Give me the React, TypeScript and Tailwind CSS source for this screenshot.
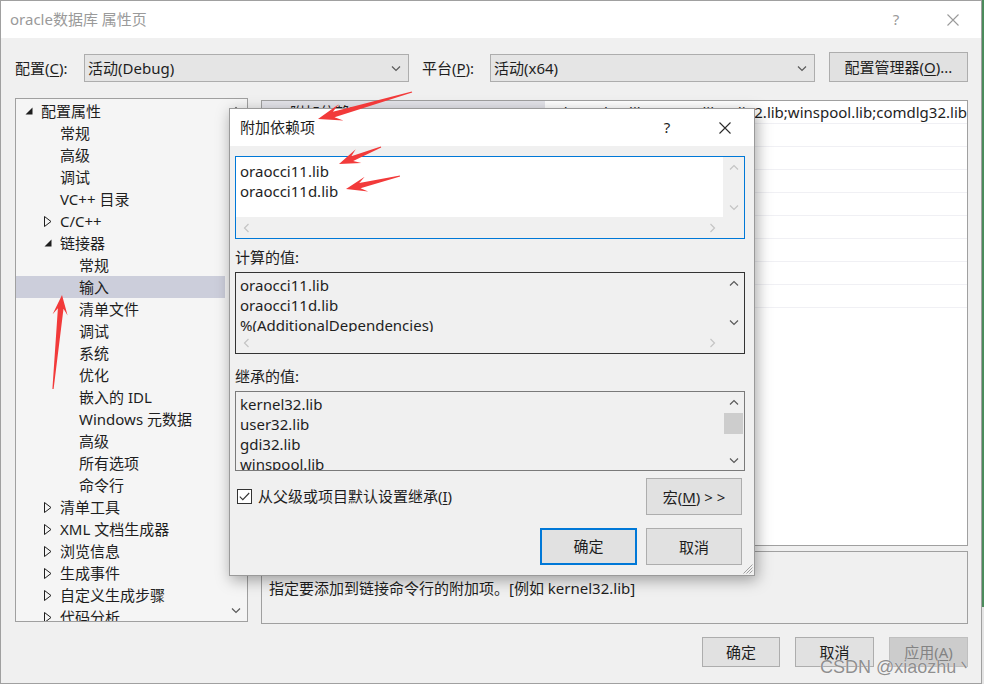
import React from "react";

type Dir = "up" | "down" | "left" | "right";

function Chevron({ dir, light = false }: { dir: Dir; light?: boolean }) {
  const d = {
    up: "M1 6.5 L5 2.5 L9 6.5",
    down: "M1 3.5 L5 7.5 L9 3.5",
    left: "M6.5 1 L2.5 5 L6.5 9",
    right: "M3.5 1 L7.5 5 L3.5 9",
  }[dir];
  return (
    <svg width="10" height="10" viewBox="0 0 10 10" className="block">
      <path d={d} fill="none" stroke={light ? "#c4c4c4" : "#5a5a5a"} strokeWidth="1.2" />
    </svg>
  );
}

function CloseX({ color }: { color: string }) {
  return (
    <svg width="12" height="12" viewBox="0 0 12 12" className="block">
      <path d="M0.5 0.5 L11.5 11.5 M11.5 0.5 L0.5 11.5" stroke={color} strokeWidth="1.1" />
    </svg>
  );
}

// red annotation arrows drawn over the screenshot
function arrow(x1: number, y1: number, x2: number, y2: number, head = 22, half = 8, neck = 2.6) {
  const len = Math.hypot(x2 - x1, y2 - y1);
  const ux = (x2 - x1) / len;
  const uy = (y2 - y1) / len;
  const nx = -uy;
  const ny = ux;
  const bx = x2 - ux * head;
  const by = y2 - uy * head;
  const kx = x2 - ux * head * 0.68;
  const ky = y2 - uy * head * 0.68;
  const pts = [
    [x1 + nx * 0.6, y1 + ny * 0.6],
    [kx + nx * neck, ky + ny * neck],
    [bx + nx * half, by + ny * half],
    [x2, y2],
    [bx - nx * half, by - ny * half],
    [kx - nx * neck, ky - ny * neck],
    [x1 - nx * 0.6, y1 - ny * 0.6],
  ];
  return pts.map((p) => p.map((v) => v.toFixed(1)).join(",")).join(" ");
}

const tree: { t: string; l: 0 | 1 | 2; e?: "open" | "closed"; sel?: boolean }[] = [
  { t: "配置属性", l: 0, e: "open" },
  { t: "常规", l: 1 },
  { t: "高级", l: 1 },
  { t: "调试", l: 1 },
  { t: "VC++ 目录", l: 1 },
  { t: "C/C++", l: 1, e: "closed" },
  { t: "链接器", l: 1, e: "open" },
  { t: "常规", l: 2 },
  { t: "输入", l: 2, sel: true },
  { t: "清单文件", l: 2 },
  { t: "调试", l: 2 },
  { t: "系统", l: 2 },
  { t: "优化", l: 2 },
  { t: "嵌入的 IDL", l: 2 },
  { t: "Windows 元数据", l: 2 },
  { t: "高级", l: 2 },
  { t: "所有选项", l: 2 },
  { t: "命令行", l: 2 },
  { t: "清单工具", l: 1, e: "closed" },
  { t: "XML 文档生成器", l: 1, e: "closed" },
  { t: "浏览信息", l: 1, e: "closed" },
  { t: "生成事件", l: 1, e: "closed" },
  { t: "自定义生成步骤", l: 1, e: "closed" },
  { t: "代码分析", l: 1, e: "closed" },
];

const indent = ["pl-[9px]", "pl-[28px]", "pl-[47px]"];

function Expander({ e }: { e?: "open" | "closed" }) {
  if (e === "open")
    return (
      <svg width="8" height="8" viewBox="0 0 8 8" className="block">
        <polygon points="7.5,0.5 7.5,7.5 0.5,7.5" fill="#1e1e1e" />
      </svg>
    );
  if (e === "closed")
    return (
      <svg width="8" height="11" viewBox="0 0 8 11" className="block">
        <polygon points="0.5,0.5 7,5.5 0.5,10.5" fill="none" stroke="#1e1e1e" strokeWidth="1" />
      </svg>
    );
  return null;
}

function Select({ value }: { value: string }) {
  return (
    <div className="w-[325px] h-[28px] border border-[#adadad] bg-[#e5e5e5] flex items-center pl-[3px] pr-[7px]">
      <span className="flex-1 leading-[20px]">{value}</span>
      <Chevron dir="down" />
    </div>
  );
}

function Btn({ children, className = "" }: { children: React.ReactNode; className?: string }) {
  return (
    <div className={`flex items-center justify-center bg-[#e1e1e1] border border-[#adadad] leading-[20px] ${className}`}>
      {children}
    </div>
  );
}

export default function App() {
  return (
    <div className="relative w-[984px] h-[684px] overflow-hidden bg-[#f0f0f0] text-[15px] text-[#1e1e1e] font-['Noto_Sans','Noto_Sans_CJK_SC',sans-serif]">
      <div className="flex h-full">
        {/* property pages window */}
        <div className="w-[982px] h-full border border-[#a0a0a0] flex flex-col pl-[14px] pr-[13px]">
          <div className="h-[37px] -ml-[14px] -mr-[13px] bg-white flex items-center pl-[9px] pr-[22px] text-[#9a9a9a] shrink-0">
            <span>oracle数据库 属性页</span>
            <span className="ml-auto w-[20px] text-center mr-[41px]">?</span>
            <CloseX color="#9a9a9a" />
          </div>

          <div className="mt-[14px] h-[30px] flex items-end shrink-0">
            <div className="w-[69px] h-[28px] flex items-center">
              配置(<u className="underline-offset-2">C</u>):
            </div>
            <Select value="活动(Debug)" />
            <div className="ml-[13px] w-[68px] h-[28px] flex items-center">
              平台(<u className="underline-offset-2">P</u>):
            </div>
            <Select value="活动(x64)" />
            <Btn className="ml-[14px] w-[139px] h-[30px]">
              配置管理器(<u className="underline-offset-2">O</u>)...
            </Btn>
          </div>

          <div className="mt-[16px] flex shrink-0">
            {/* tree */}
            <div className="w-[233px] h-[524px] border border-[#a0a0a0] bg-[#f5f5f5] flex">
              <div className="flex-1 overflow-hidden pt-[1px]">
                {tree.map((n, i) => (
                  <div
                    key={i}
                    className={`h-[22px] flex items-center whitespace-nowrap leading-[20px] ${indent[n.l]} ${
                      n.sel ? "bg-[#cccedb]" : ""
                    }`}
                  >
                    <div className="w-[16px] flex items-center">
                      <Expander e={n.e} />
                    </div>
                    <span>{n.t}</span>
                  </div>
                ))}
              </div>
              <div className="w-[22px] flex flex-col justify-between">
                <div className="h-[22px] flex items-center justify-center">
                  <Chevron dir="up" />
                </div>
                <div className="h-[22px] flex items-center justify-center">
                  <Chevron dir="down" />
                </div>
              </div>
            </div>

            {/* grid + description */}
            <div className="ml-[13px] w-[707px] flex flex-col">
              <div className="mt-[2px] h-[446px] border border-[#a0a0a0] bg-white overflow-hidden">
                <div className="h-[23px] flex border-b border-[#f0f0f4]">
                  <div className="w-[283px] bg-[#e4e4ea] pl-[28px] flex items-center leading-[20px]">附加依赖项</div>
                  <div className="flex-1 flex justify-end items-center overflow-hidden whitespace-nowrap leading-[20px]">
                    <span>kernel32.lib;user32.lib;gdi32.lib;winspool.lib;comdlg32.lib</span>
                  </div>
                </div>
                {[0, 1, 2, 3, 4, 5, 6, 7].map((i) => (
                  <div key={i} className="h-[23px] border-b border-[#f0f0f4]" />
                ))}
              </div>
              <div className="mt-[5px] h-[73px] border border-[#a0a0a0] bg-[#f0f0f0] px-[7px] pt-[2px]">
                <div className="font-bold leading-[20px]">附加依赖项</div>
                <div className="mt-[4px] leading-[20px]">指定要添加到链接命令行的附加项。[例如 kernel32.lib]</div>
              </div>
            </div>
          </div>

          <div className="mt-[13px] h-[30px] flex justify-end shrink-0">
            <Btn className="w-[78px] h-[30px]">确定</Btn>
            <Btn className="ml-[15px] w-[79px] h-[30px]">取消</Btn>
            <div className="ml-[15px] w-[79px] h-[30px] flex items-center justify-center bg-[#cccccc] border border-[#bfbfbf] text-[#838383]">
              应用(<u className="underline-offset-2">A</u>)
            </div>
          </div>
        </div>
        <div className="w-[2px] h-full flex flex-col">
          <div className="h-[607px] bg-[#4b8b5c]" />
          <div className="flex-1 bg-[#e4e4e4]" />
        </div>
      </div>

      {/* 附加依赖项 dialog */}
      <div className="absolute left-[229px] top-[108px] w-[526px] h-[468px] border border-[#9a9a9a] bg-[#f0f0f0] shadow-[2px_4px_14px_rgba(0,0,0,0.35)] flex flex-col">
        <div className="h-[37px] bg-white flex items-center pl-[10px] pr-[23px] shrink-0">
          <span>附加依赖项</span>
          <span className="ml-auto w-[20px] text-center mr-[42px]">?</span>
          <CloseX color="#2a2a2a" />
        </div>
        <div className="px-[5px] pt-[10px] flex flex-col">
          {/* editable box */}
          <div className="w-[510px] h-[83px] border border-[#0078d7] flex flex-col">
            <div className="h-[60px] flex">
              <div className="flex-1 bg-white pl-[4px] pt-[4px] leading-[20px] overflow-hidden">
                <div>oraocci11.lib</div>
                <div>oraocci11d.lib</div>
              </div>
              <div className="w-[21px] flex flex-col justify-between">
                <div className="h-[21px] flex items-center justify-center">
                  <Chevron dir="up" light />
                </div>
                <div className="h-[21px] flex items-center justify-center">
                  <Chevron dir="down" light />
                </div>
              </div>
            </div>
            <div className="h-[21px] flex items-center justify-between pl-[6px] pr-[27px]">
              <Chevron dir="left" light />
              <Chevron dir="right" light />
            </div>
          </div>

          <div className="mt-[8px] leading-[20px]">计算的值:</div>
          <div className="mt-[5px] w-[510px] h-[82px] border border-[#333333] flex flex-col">
            <div className="h-[59px] flex">
              <div className="flex-1 pl-[4px] pt-[2px] leading-[20px] overflow-hidden whitespace-nowrap">
                <div>oraocci11.lib</div>
                <div>oraocci11d.lib</div>
                <div>%(AdditionalDependencies)</div>
              </div>
              <div className="w-[21px] flex flex-col justify-between">
                <div className="h-[21px] flex items-center justify-center">
                  <Chevron dir="up" />
                </div>
                <div className="h-[21px] flex items-center justify-center">
                  <Chevron dir="down" />
                </div>
              </div>
            </div>
            <div className="h-[21px] flex items-center justify-between pl-[6px] pr-[27px]">
              <Chevron dir="left" light />
              <Chevron dir="right" light />
            </div>
          </div>

          <div className="mt-[12px] leading-[20px]">继承的值:</div>
          <div className="mt-[5px] w-[510px] h-[80px] border border-[#7a7a7a] flex">
            <div className="flex-1 pl-[4px] pt-[2px] leading-[20px] overflow-hidden whitespace-nowrap">
              <div>kernel32.lib</div>
              <div>user32.lib</div>
              <div>gdi32.lib</div>
              <div>winspool.lib</div>
            </div>
            <div className="w-[21px] flex flex-col">
              <div className="h-[21px] flex items-center justify-center">
                <Chevron dir="up" />
              </div>
              <div className="h-[21px] mx-[1px] bg-[#cdcdcd]" />
              <div className="flex-1" />
              <div className="h-[21px] flex items-center justify-center">
                <Chevron dir="down" />
              </div>
            </div>
          </div>

          <div className="mt-[7px] flex items-start mr-[7px]">
            <div className="mt-[8px] ml-[2px] flex items-center">
              <div className="w-[15px] h-[15px] border border-[#333333] bg-white flex items-center justify-center">
                <svg width="11" height="9" viewBox="0 0 11 9" className="block">
                  <path d="M0.8 4.6 L3.8 7.6 L10.2 1" fill="none" stroke="#333333" strokeWidth="1.1" />
                </svg>
              </div>
              <span className="ml-[6px] leading-[20px]">
                从父级或项目默认设置继承(<u className="underline-offset-2">I</u>)
              </span>
            </div>
            <Btn className="ml-auto w-[96px] h-[37px]">
              宏(<u className="underline-offset-2">M</u>)&nbsp;&gt; &gt;
            </Btn>
          </div>

          <div className="mt-[13px] flex justify-end mr-[7px]">
            <div className="w-[97px] h-[37px] flex items-center justify-center bg-[#e1e1e1] border-2 border-[#0078d7]">确定</div>
            <Btn className="ml-[9px] w-[96px] h-[37px]">取消</Btn>
          </div>
        </div>
        <svg width="11" height="11" viewBox="0 0 11 11" className="absolute right-[1px] bottom-[1px]">
          <path d="M10.5 1.5 L1.5 10.5 M10.5 4.5 L4.5 10.5 M10.5 7.5 L7.5 10.5" stroke="#a0a0a0" strokeWidth="1" />
        </svg>
      </div>

      {/* watermark */}
      <div className="absolute left-[820px] top-[655px] text-[18px] leading-[24px] text-[#8f8f8f] font-['Liberation_Sans',sans-serif] [text-shadow:0_0_1px_#ffffff]">
        CSDN @xiaozhu丶
      </div>

      {/* red arrows */}
      <svg width="984" height="684" viewBox="0 0 984 684" className="absolute inset-0 pointer-events-none">
        <polygon points={arrow(412, 92, 318, 119, 24, 8.5, 2.8)} fill="#f23a3a" />
        <polygon points={arrow(381, 147, 339, 164, 21, 7.5, 2.6)} fill="#f23a3a" />
        <polygon points={arrow(400, 176, 346, 189, 21, 7.5, 2.6)} fill="#f23a3a" />
        <polygon points={arrow(53, 389, 62, 295, 20, 7.5, 2.8)} fill="#f23a3a" />
      </svg>
    </div>
  );
}
